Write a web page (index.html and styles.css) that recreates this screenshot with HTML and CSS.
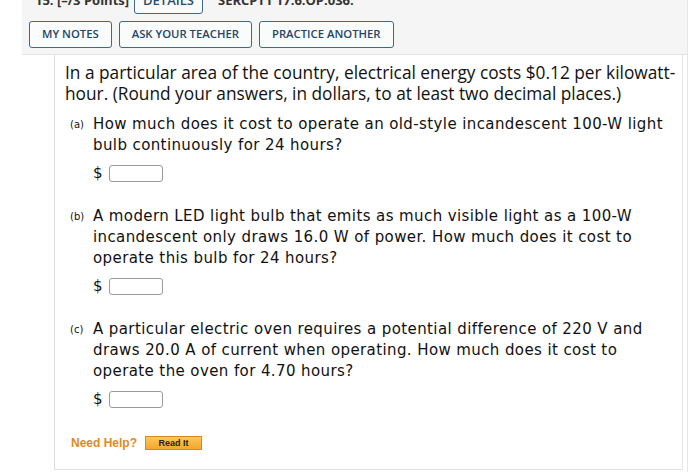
FILE: index.html
```html
<!DOCTYPE html>
<html>
<head>
<meta charset="utf-8">
<link rel="stylesheet" href="styles.css">
</head>
<body>
<div class="outer">
  <div class="header">
    <div class="qline">
      <span class="qnum">15. [–/3 Points]</span>
      <span class="details">DETAILS</span>
      <span class="code">SERCPT1 17.6.OP.036.</span>
    </div>
    <div class="btns">
      <span class="btn">MY NOTES</span>
      <span class="btn">ASK YOUR TEACHER</span>
      <span class="btn">PRACTICE ANOTHER</span>
    </div>
  </div>
  <div class="content">
    <p class="intro">In a particular area of the country, electrical energy costs $0.12 per kilowatt-hour. (Round your answers, in dollars, to at least two decimal places.)</p>
    <div class="part">
      <span class="lbl">(a)</span>
      <div class="body">
        <p>How much does it cost to operate an old-style incandescent 100-W light bulb continuously for 24 hours?</p>
        <div class="ans">$ <span class="box"></span></div>
      </div>
    </div>
    <div class="part">
      <span class="lbl">(b)</span>
      <div class="body">
        <p>A modern LED light bulb that emits as much visible light as a 100-W incandescent only draws 16.0 W of power. How much does it cost to operate this bulb for 24 hours?</p>
        <div class="ans">$ <span class="box"></span></div>
      </div>
    </div>
    <div class="part">
      <span class="lbl">(c)</span>
      <div class="body">
        <p>A particular electric oven requires a potential difference of 220 V and draws 20.0 A of current when operating. How much does it cost to operate the oven for 4.70 hours?</p>
        <div class="ans">$ <span class="box"></span></div>
      </div>
    </div>
    <div class="help">
      <span class="need">Need Help?</span>
      <span class="read">Read It</span>
    </div>
  </div>
</div>
</body>
</html>
```

FILE: styles.css
```css
html, body {
  margin: 0;
  padding: 0;
  background: #fff;
}
.outer {
  margin-left: 22px;
  width: 665px;
  height: 472px;
  border-right: 1px solid #e6e6e6;
  overflow: hidden;
}
.header {
  background: #f5f5f5;
  height: 55px;
  border-bottom: 1px solid #e4e4e4;
  box-sizing: border-box;
  overflow: hidden;
}
.qline {
  display: flex;
  align-items: center;
  height: 28px;
  margin-top: -14px;
  padding-left: 13px;
  font-family: "Open Sans", sans-serif;
  font-size: 13px;
  font-weight: 700;
  color: #333;
}
.qnum { width: 99px; }
.details {
  border: 1.5px solid #3c6a88;
  border-radius: 3px;
  height: 28px;
  line-height: 26px;
  box-sizing: border-box;
  text-align: center;
  color: #2a4d6e;
  font-weight: 600;
  background: #fafafa;
  margin-right: 15px;
  width: 69px;
}
.btns {
  display: flex;
  gap: 7px;
  margin-top: 7px;
  margin-left: 7px;
}
.btn {
  font-family: "Open Sans", sans-serif;
  font-size: 11.3px;
  font-weight: 600;
  color: #23466a;
  border: 1.5px solid #3c6a88;
  border-radius: 3px;
  background: #fafbfb;
  height: 27px;
  line-height: 24px;
  padding: 0 12px;
  box-sizing: border-box;
}
.content {
  margin-left: 32px;
  width: 629px;
  height: 415px;
  border-left: 1px solid #dedede;
  border-right: 1px solid #e6e6e6;
  border-bottom: 1px solid #e0e0e0;
  box-sizing: border-box;
  padding: 7px 0 0 10px;
  color: #111;
}
.intro {
  margin: 0;
  font-family: "Open Sans", sans-serif;
  font-size: 17.3px;
  line-height: 21px;
  width: 620px;
}
.part {
  display: flex;
  margin-top: 10px;
  font-family: "DejaVu Sans", Verdana, sans-serif;
  font-size: 15px;
  letter-spacing: 0.4px;
  line-height: 21px;
}
.lbl {
  width: 28px;
  padding-left: 5px;
  box-sizing: border-box;
  font-size: 10px;
  letter-spacing: 0;
  line-height: 21px;
}
.body p {
  margin: 0;
  width: 580px;
}
.ans {
  display: flex;
  align-items: center;
  gap: 6px;
  margin-top: 7px;
  margin-bottom: 13px;
  height: 20px;
}
.box {
  display: inline-block;
  width: 54px;
  height: 17px;
  border: 1px solid #9a9a9a;
  border-radius: 3px;
  box-sizing: border-box;
}
.help {
  display: flex;
  align-items: center;
  margin-top: 14px;
  margin-left: 6px;
  gap: 8px;
}
.need {
  font-family: "Liberation Sans", Arial, sans-serif;
  font-weight: 700;
  font-size: 12px;
  color: #e08a1f;
}
.read {
  font-family: "Liberation Sans", Arial, sans-serif;
  font-weight: 700;
  font-size: 9px;
  color: #222;
  background: linear-gradient(#fbc85a, #f3a72c);
  border: 1px solid #d48a1e;
  width: 57px;
  height: 14px;
  line-height: 12px;
  text-align: center;
  box-sizing: border-box;
}
```
